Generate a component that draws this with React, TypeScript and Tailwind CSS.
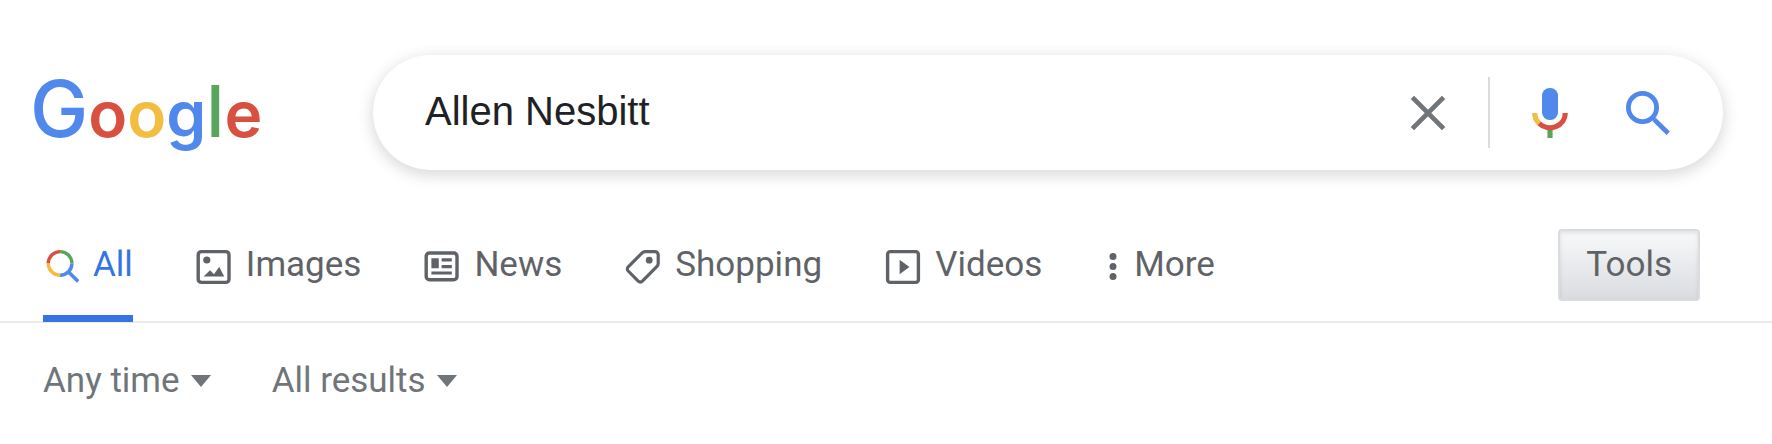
import { useState, type ReactNode } from "react";

const logoLetters = [
  { char: "G", style: "text-[78px] font-medium text-[#5088ec]" },
  { char: "o", style: "text-[64px] font-semibold text-[#d85140]" },
  { char: "o", style: "text-[64px] font-semibold text-[#f1be42]" },
  { char: "g", style: "text-[64px] font-semibold text-[#5088ec]" },
  { char: "l", style: "text-[72px] font-medium text-[#5aa55c]" },
  { char: "e", style: "text-[64px] font-semibold text-[#d85140]" },
];

function Logo() {
  return (
    <a href="#home" className="flex items-baseline font-['Inter',sans-serif] leading-none">
      {logoLetters.map((letter, index) => (
        <span key={index} className={letter.style}>
          {letter.char}
        </span>
      ))}
    </a>
  );
}

function ClearIcon() {
  return (
    <svg viewBox="0 0 36 36" className="size-9" stroke="#70757a" strokeWidth="4.8" fill="none">
      <path d="M2.4 2.4 33.6 33.6M33.6 2.4 2.4 33.6" />
    </svg>
  );
}

function MicIcon() {
  return (
    <svg viewBox="0 0 36 50" className="h-[50px] w-9" fill="none">
      <rect x="10" y="0" width="16" height="32" rx="7.6" fill="#5088ec" />
      <path d="M15.4 41h5.2v9h-5.2z" fill="#5aa55c" />
      <path d="M2.7 25A15.3 14.7 0 0 0 7.2 35.4" stroke="#f1be42" strokeWidth="5.2" />
      <path d="M7.2 35.4A15.3 14.7 0 0 0 33.3 25" stroke="#d85140" strokeWidth="5.2" />
    </svg>
  );
}

function SearchIcon() {
  return (
    <svg viewBox="0 0 44 44" className="size-11" fill="none" stroke="#5088ec">
      <circle cx="16.5" cy="16.5" r="14.1" strokeWidth="4.8" />
      <path d="M28.3 28.6 42.2 42.3" strokeWidth="4.8" />
      <path d="M27.4 29.8v-2.2h2.4" strokeWidth="1.6" />
    </svg>
  );
}

function AllIcon() {
  return (
    <svg viewBox="0 0 36 36" className="size-9" fill="none" strokeWidth="3.4">
      <path d="M5.3 14.4A11.8 11.8 0 0 1 17.1 2.6" stroke="#d85140" />
      <path d="M17.1 2.6A11.8 11.8 0 0 1 28.9 14.4" stroke="#5aa55c" />
      <path d="M5.3 14.4A11.8 11.8 0 0 0 17.1 26.2" stroke="#f1be42" />
      <path d="M28.9 14.4A11.8 11.8 0 0 1 17.1 26.2" stroke="#5088ec" />
      <path d="M25 22.4 35.2 32.6" stroke="#5088ec" strokeWidth="3.6" />
    </svg>
  );
}

function ImagesIcon() {
  return (
    <svg viewBox="0 0 36 36" className="size-9" fill="currentColor">
      <rect x="2.2" y="2.6" width="30.8" height="30.8" rx="3.2" fill="none" stroke="currentColor" strokeWidth="3.4" />
      <circle cx="10.8" cy="11" r="3.6" />
      <path d="M7.6 27.6 14 21.2l4 4 5.2-7.4 5 9.8z" />
    </svg>
  );
}

function NewsIcon() {
  return (
    <svg viewBox="0 0 36 36" className="size-9" fill="currentColor">
      <rect x="2.2" y="4" width="30.8" height="26.8" rx="3.2" fill="none" stroke="currentColor" strokeWidth="3.4" />
      <path d="M7.4 9.2h7.4v10H7.4zM17.6 9.2h10.2v3.2H17.6zM17.6 16h10.2v3.2H17.6zM7.4 22.4h20.4v3.2H7.4z" />
    </svg>
  );
}

function ShoppingIcon() {
  return (
    <svg viewBox="0 0 36 36" className="size-9" fill="currentColor">
      <path
        d="M20 2.6h10a3.2 3.2 0 0 1 3.2 3.2V14.6a4 4 0 0 1-1.2 2.8L17.4 32.2a3 3 0 0 1-4.2 0L3.2 22a3 3 0 0 1 0-4.2L17.2 3.8a4 4 0 0 1 2.8-1.2z"
        fill="none"
        stroke="currentColor"
        strokeWidth="3.2"
      />
      <circle cx="24.2" cy="11.2" r="3.4" />
    </svg>
  );
}

function VideosIcon() {
  return (
    <svg viewBox="0 0 36 36" className="size-9" fill="currentColor">
      <rect x="2.6" y="2.6" width="30.8" height="30.8" rx="2.6" fill="none" stroke="currentColor" strokeWidth="3.4" />
      <path d="M14.6 10.8v14.4l9.8-7.2z" />
    </svg>
  );
}

function MoreIcon() {
  return (
    <svg viewBox="0 0 10 36" className="h-9 w-[10px]" fill="currentColor">
      <circle cx="5" cy="7.4" r="3.5" />
      <circle cx="5" cy="17.4" r="3.5" />
      <circle cx="5" cy="27.4" r="3.5" />
    </svg>
  );
}

const tabs: { label: string; icon: ReactNode }[] = [
  { label: "All", icon: <AllIcon /> },
  { label: "Images", icon: <ImagesIcon /> },
  { label: "News", icon: <NewsIcon /> },
  { label: "Shopping", icon: <ShoppingIcon /> },
  { label: "Videos", icon: <VideosIcon /> },
];

function Filter({ label, options }: { label: string; options: string[] }) {
  return (
    <label className="flex items-center gap-[11px]">
      <select
        aria-label={label}
        className="field-sizing-content cursor-pointer appearance-none bg-transparent leading-10 outline-none"
      >
        {options.map((option) => (
          <option key={option}>{option}</option>
        ))}
      </select>
      <svg viewBox="0 0 20 12" className="h-3 w-5" fill="currentColor">
        <path d="M0 0h20L10 12z" />
      </svg>
    </label>
  );
}

export default function App() {
  const [query, setQuery] = useState("Allen Nesbitt");
  const [active, setActive] = useState("All");

  return (
    <div className="bg-white font-['Roboto',sans-serif] text-[35px] text-[#5f6368]">
      <header className="flex items-center pt-[55px] pr-[49px] pl-[30px]">
        <div className="w-[343px] shrink-0 pb-2">
          <Logo />
        </div>
        <form
          role="search"
          onSubmit={(event) => event.preventDefault()}
          className="flex h-[115px] min-w-0 flex-1 items-center rounded-full bg-white pr-[53px] pl-[52px] shadow-[0_4px_14px_2px_rgba(64,60,67,0.18)]"
        >
          <input
            type="text"
            aria-label="Search"
            value={query}
            onChange={(event) => setQuery(event.target.value)}
            className="min-w-0 flex-1 bg-transparent pb-1 font-['Liberation_Sans',sans-serif] text-[40px] leading-[48px] text-[#202124] outline-none"
          />
          <button type="button" aria-label="Clear" onClick={() => setQuery("")} className="mr-[42px]">
            <ClearIcon />
          </button>
          <div className="h-[71px] w-[2px] bg-[#dadce0]" />
          <button type="button" aria-label="Search by voice" className="mx-[42px]">
            <MicIcon />
          </button>
          <button type="submit" aria-label="Search" className="ml-4">
            <SearchIcon />
          </button>
        </form>
      </header>

      <nav className="flex items-start border-b-2 border-[#ebebeb] pt-[59px] pr-[72px] pl-[43px]">
        <ul className="flex flex-1 gap-[63px]">
          {tabs.map((tab) => (
            <li key={tab.label} className="-mb-px">
              <a
                href={`#${tab.label.toLowerCase()}`}
                onClick={() => setActive(tab.label)}
                className={
                  active === tab.label
                    ? "flex h-[93px] flex-col justify-between text-[#3574e2]"
                    : "flex h-[93px] flex-col justify-between"
                }
              >
                <span className="flex h-[72px] items-center gap-[14px]">
                  <span className="pt-[4px]">{tab.icon}</span>
                  {tab.label}
                </span>
                {active === tab.label && <span className="h-[7px] bg-[#3574e2]" />}
              </a>
            </li>
          ))}
          <li>
            <button type="button" className="flex h-[72px] items-center gap-4 pl-[3px]">
              <span className="pt-[4px]">
                <MoreIcon />
              </span>
              More
            </button>
          </li>
        </ul>
        <button
          type="button"
          className="h-[72px] rounded-[4px] border-2 border-[#dadce0] bg-linear-to-b from-[#f8f9fa] to-[#dadce0] px-[26px] shadow-[inset_0_2px_4px_rgba(0,0,0,0.1)]"
        >
          Tools
        </button>
      </nav>

      <div className="flex gap-[61px] pt-[38px] pl-[43px] text-[#70757a]">
        <Filter label="Time" options={["Any time", "Past hour", "Past 24 hours", "Past week"]} />
        <Filter label="Results" options={["All results", "Verbatim"]} />
      </div>
    </div>
  );
}
